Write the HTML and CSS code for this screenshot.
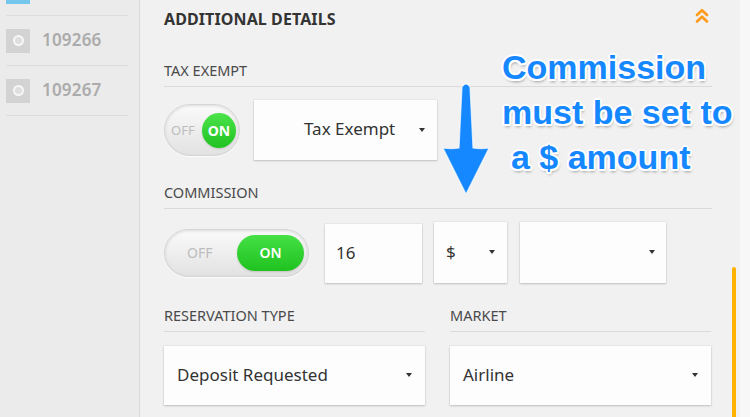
FILE: index.html
```html
<!DOCTYPE html>
<html>
<head>
<meta charset="utf-8">
<link rel="stylesheet" href="styles.css">
</head>
<body>
<div class="app">
  <aside class="sidebar">
    <div class="item item-cut"><span class="sel-bar"></span></div>
    <div class="item">
      <span class="item-icon"><span class="ring"></span></span>
      <span class="item-id">109266</span>
    </div>
    <div class="item">
      <span class="item-icon"><span class="ring"></span></span>
      <span class="item-id">109267</span>
    </div>
  </aside>

  <main class="panel">
    <div class="panel-head">
      <h2 class="title">ADDITIONAL DETAILS</h2>
      <svg class="collapse" width="14" height="17" viewBox="0 0 14 17">
        <path d="M2 8 L7 3.2 L12 8" fill="none" stroke="#ff9a1a" stroke-width="2.6" stroke-linecap="round" stroke-linejoin="round"/>
        <path d="M2 14.5 L7 9.7 L12 14.5" fill="none" stroke="#ff9a1a" stroke-width="2.6" stroke-linecap="round" stroke-linejoin="round"/>
      </svg>
    </div>

    <div class="field-label">TAX EXEMPT</div>
    <div class="row row-tax">
      <div class="toggle toggle-sm">
        <span class="off">OFF</span>
        <span class="knob-sm">ON</span>
      </div>
      <div class="box select select-tax"><span>Tax Exempt</span><i class="caret"></i></div>
    </div>

    <div class="field-label">COMMISSION</div>
    <div class="row row-comm">
      <div class="toggle toggle-lg">
        <span class="off">OFF</span>
        <span class="knob-lg">ON</span>
      </div>
      <div class="box input-num">16</div>
      <div class="box select select-cur"><span>$</span><i class="caret"></i></div>
      <div class="box select select-empty"><span></span><i class="caret"></i></div>
    </div>

    <div class="cols">
      <div class="col">
        <div class="field-label">RESERVATION TYPE</div>
        <div class="box select select-wide"><span>Deposit Requested</span><i class="caret"></i></div>
      </div>
      <div class="col">
        <div class="field-label">MARKET</div>
        <div class="box select select-wide"><span>Airline</span><i class="caret"></i></div>
      </div>
    </div>
  </main>

  <div class="gutter"></div>

  <div class="scroll-thumb"></div>

  <svg class="callout-arrow" width="52" height="116" viewBox="0 0 52 116">
    <path d="M22 5 Q26 -1 30 5 L33 66 Q41 67.5 49 66 L26 112 L3 66 Q11 67.5 19 66 Z" fill="#1688ff" stroke="#ffffff" stroke-width="1.2" stroke-opacity="0.7"/>
  </svg>

  <div class="callout">
    <span class="cl">Commission</span>
    <span class="cl">must be set to</span>
    <span class="cl cl-indent">a $ amount</span>
  </div>
</div>
</body>
</html>
```

FILE: styles.css
```css
* { box-sizing: border-box; }
html, body {
  margin: 0;
  padding: 0;
  width: 750px;
  height: 417px;
  overflow: hidden;
}
body {
  font-family: "Noto Sans", "Open Sans", sans-serif;
  color: #333;
  background: #f1f1f1;
}
.app {
  position: relative;
  display: flex;
  width: 750px;
  height: 417px;
}

/* sidebar */
.sidebar {
  width: 140px;
  flex: none;
  background: #ebebeb;
  border-right: 1px solid #d9d9d9;
  box-shadow: 1px 0 2px rgba(0,0,0,0.05);
  padding: 0 11px 0 6px;
}
.item {
  display: flex;
  align-items: center;
  height: 50px;
  border-bottom: 1.5px solid #dcdcdc;
}
.item-cut {
  height: 16px;
  align-items: flex-start;
}
.sel-bar {
  display: block;
  width: 24px;
  height: 4px;
  background: #74c6ec;
}
.item-icon {
  width: 24px;
  height: 24px;
  background: #d3d3d3;
  display: flex;
  align-items: center;
  justify-content: center;
  flex: none;
}
.ring {
  width: 11px;
  height: 11px;
  border-radius: 50%;
  border: 2.5px solid #f7f7f7;
  background: #dedede;
}
.item-id {
  margin-left: 12px;
  font-size: 17px;
  font-weight: 600;
  color: #ababab;
  letter-spacing: 0.2px;
  padding-bottom: 2px;
}

/* panel */
.panel {
  width: 600px;
  flex: none;
  padding: 0 28px 0 24px;
  background: #f1f1f1;
}
.panel-head {
  height: 38px;
  display: flex;
  align-items: center;
  justify-content: space-between;
  padding-right: 3px;
}
.title {
  margin: 0;
  font-size: 16px;
  font-weight: 700;
  color: #333;
  letter-spacing: 0.1px;
}
.collapse {
  display: block;
  margin-top: -8px;
}
.field-label {
  font-size: 14.5px;
  line-height: 20px;
  color: #4a4a4a;
  padding-bottom: 6px;
  border-bottom: 1px solid #dadada;
  margin-top: 22px;
}

.row {
  display: flex;
  align-items: center;
  margin-top: 13px;
}
.row-tax { height: 60px; gap: 14px; }
.row-comm { height: 61px; }

.box {
  background: #fdfdfd;
  box-shadow: 0 1px 2px rgba(0,0,0,0.18), 0 0 0 1px rgba(0,0,0,0.03);
  font-size: 17px;
  color: #333;
  display: flex;
  align-items: center;
  padding-bottom: 3px;
}
.select { justify-content: space-between; }
.caret {
  display: block;
  width: 0;
  height: 0;
  margin-top: 2px;
  border-left: 3.5px solid transparent;
  border-right: 3.5px solid transparent;
  border-top: 4.5px solid #333;
}

.select-tax {
  width: 183px;
  height: 60px;
  padding-left: 50px;
  padding-right: 12px;
}

.toggle {
  position: relative;
  display: flex;
  align-items: center;
  border-radius: 30px;
  background: linear-gradient(#fafafa, #e2e2e2);
  border: 1px solid #d6d6d6;
  box-shadow: inset 0 1px 3px rgba(0,0,0,0.12), 0 1px 1px rgba(255,255,255,0.8);
  flex: none;
}
.toggle .off {
  font-size: 13px;
  color: #bdbdbd;
}
.toggle-sm {
  width: 76px;
  height: 52px;
  padding: 0 3px 0 6px;
  justify-content: space-between;
}
.knob-sm {
  width: 34px;
  height: 35px;
  border-radius: 50%;
  background: linear-gradient(#4be34b, #20c220);
  color: #fff;
  font-weight: 700;
  font-size: 14px;
  display: flex;
  align-items: center;
  justify-content: center;
  box-shadow: 0 1px 2px rgba(0,0,0,0.15);
}
.toggle-lg {
  width: 145px;
  height: 48px;
  padding: 0 4px 0 22px;
  justify-content: space-between;
}
.toggle-lg .off { font-size: 14px; }
.knob-lg {
  width: 67px;
  height: 36px;
  border-radius: 18px;
  background: linear-gradient(#45e045, #1fc21f);
  color: #fff;
  font-weight: 600;
  font-size: 14px;
  display: flex;
  align-items: center;
  justify-content: center;
  box-shadow: 0 1px 2px rgba(0,0,0,0.15);
}

.input-num {
  width: 97px;
  height: 59px;
  margin-left: 16px;
  padding-left: 11px;
  align-self: flex-end;
}
.select-cur {
  width: 73px;
  height: 61px;
  margin-left: 12px;
  padding-left: 12px;
  padding-right: 12px;
}
.select-empty {
  width: 146px;
  height: 61px;
  margin-left: 13px;
  padding-left: 12px;
  padding-right: 11px;
}

.cols {
  display: flex;
  gap: 25px;
}
.col { width: 261px; }
.col .field-label { margin-top: 22px; }
.select-wide {
  width: 261px;
  height: 59px;
  margin-top: 14px;
  padding-left: 13px;
  padding-right: 13px;
}

.gutter {
  flex: 1;
  background: #f7f7f7;
}

.scroll-thumb {
  position: absolute;
  left: 732px;
  top: 267px;
  width: 4px;
  height: 160px;
  border-radius: 2px;
  background: #ffb300;
}

.callout-arrow {
  position: absolute;
  left: 440px;
  top: 82px;
}
.callout {
  position: absolute;
  left: 502px;
  top: 45px;
  font-family: "Liberation Sans", Arial, sans-serif;
  font-weight: 700;
  font-size: 34px;
  line-height: 45px;
  color: #1688ff;
  text-shadow:
    -1.5px -1.5px 0 #fff, 1.5px -1.5px 0 #fff, -1.5px 1.5px 0 #fff, 1.5px 1.5px 0 #fff,
    0 -2px 0 #fff, 0 2px 0 #fff, -2px 0 0 #fff, 2px 0 0 #fff,
    1px 3px 3px rgba(0,0,0,0.35);
  white-space: nowrap;
}
.cl { display: block; }
.cl-indent { padding-left: 9px; }
```
